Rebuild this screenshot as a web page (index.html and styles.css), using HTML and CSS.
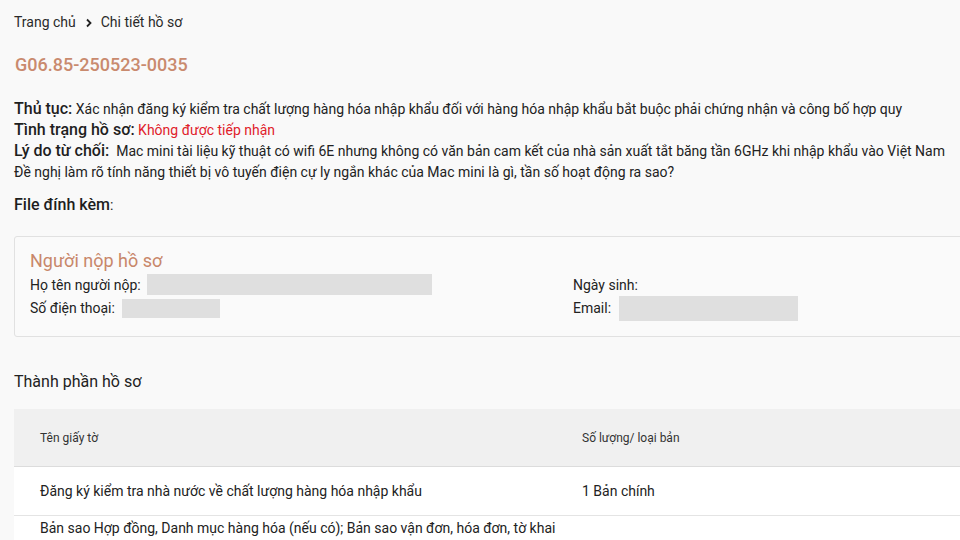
FILE: index.html
```html
<!DOCTYPE html>
<html lang="vi">
<head>
<meta charset="utf-8">
<title>Chi tiết hồ sơ</title>
<link rel="stylesheet" href="styles.css">
</head>
<body>
<div class="page">
  <nav class="crumbs">
    <span>Trang chủ</span>
    <svg class="chev" viewBox="0 0 10 10" width="10" height="10"><path d="M3 1.5 L6.5 5 L3 8.5" fill="none" stroke="#222" stroke-width="1.8"/></svg>
    <span>Chi tiết hồ sơ</span>
  </nav>
  <h1 class="code">G06.85-250523-0035</h1>

  <div class="info">
    <div class="line"><span class="lbl">Thủ tục:</span> <span class="val">Xác nhận đăng ký kiểm tra chất lượng hàng hóa nhập khẩu đối với hàng hóa nhập khẩu bắt buộc phải chứng nhận và công bố hợp quy</span></div>
    <div class="line"><span class="lbl">Tình trạng hồ sơ:</span> <span class="val red">Không được tiếp nhận</span></div>
    <div class="line"><span class="lbl">Lý do từ chối:</span>&nbsp; <span class="val">Mac mini tài liệu kỹ thuật có wifi 6E nhưng không có văn bản cam kết của nhà sản xuất tắt băng tần 6GHz khi nhập khẩu vào Việt Nam<br>Đề nghị làm rõ tính năng thiết bị vô tuyến điện cự ly ngắn khác của Mac mini là gì, tần số hoạt động ra sao?</span></div>
  </div>

  <div class="files"><span class="lbl">File đính kèm</span>:</div>

  <section class="card">
    <h2 class="card-title">Người nộp hồ sơ</h2>
    <div class="grid">
      <div class="field"><span>Họ tên người nộp:</span><span class="mask mask-name"></span></div>
      <div class="field"><span>Ngày sinh:</span></div>
      <div class="field"><span>Số điện thoại:</span><span class="mask mask-phone"></span></div>
      <div class="field"><span>Email:</span><span class="mask mask-email"></span></div>
    </div>
  </section>

  <h3 class="sec">Thành phần hồ sơ</h3>
  <div class="table">
    <div class="thead">
      <div class="c1">Tên giấy tờ</div>
      <div class="c2">Số lượng/ loại bản</div>
    </div>
    <div class="row">
      <div class="c1">Đăng ký kiểm tra nhà nước về chất lượng hàng hóa nhập khẩu</div>
      <div class="c2">1 Bản chính</div>
    </div>
    <div class="row row2">
      <div class="c1">Bản sao Hợp đồng, Danh mục hàng hóa (nếu có); Bản sao vận đơn, hóa đơn, tờ khai hàng hóa nhập khẩu (có xác nhận của người nhập khẩu); ảnh hoặc bản mô tả hàng hóa</div>
      <div class="c2">1 Bản sao</div>
    </div>
  </div>
</div>
</body>
</html>
```

FILE: styles.css
```css
html, body {
  margin: 0;
  padding: 0;
  background: #f9f9f9;
  overflow: hidden;
}
body {
  font-family: Roboto, "Liberation Sans", Arial, sans-serif;
  color: #222;
}
.page {
  width: 1120px;
  padding: 12px 0 0 14px;
}
.crumbs {
  display: flex;
  align-items: center;
  gap: 7px;
  font-size: 14px;
  color: #2a2a2a;
  height: 20px;
}
.chev { margin: 1px 0 0 1px; }
.code {
  margin: 22px 0 0 1px;
  font-size: 18px;
  font-weight: 500;
  color: #c98a6e;
  line-height: 22px;
}
.info {
  margin-top: 23px;
}
.line {
  font-size: 14px;
  line-height: 21px;
}
.lbl {
  font-size: 16px;
  font-weight: 500;
  color: #1e1e1e;
  line-height: 1;
}
.val { font-size: 14px; color: #222; }
.red { color: #e0202a; }
.files {
  margin-top: 11px;
  font-size: 14px;
  line-height: 22px;
}
.card {
  margin-top: 20px;
  border: 1px solid #e1e1e1;
  border-radius: 3px;
  background: #fafafa;
  padding: 12px 15px 16px;
}
.card-title {
  margin: 0;
  font-size: 18px;
  font-weight: 400;
  color: #c8876a;
  line-height: 24px;
}
.grid {
  display: grid;
  grid-template-columns: 543px 1fr;
  font-size: 14px;
}
.field {
  display: flex;
  align-items: center;
  gap: 6px;
  height: 23.5px;
}
.mask { background: #dfdfdf; display: inline-block; }
.mask-name { width: 285px; height: 21px; margin-top: -1px; }
.mask-phone { width: 98px; height: 19px; margin-left: 1px; }
.mask-email { width: 179px; height: 25px; margin-left: 2px; }
.sec {
  margin: 34px 0 0;
  font-size: 16px;
  font-weight: 400;
  color: #222;
  line-height: 22px;
}
.table {
  margin-top: 16px;
  background: #fff;
}
.thead, .row {
  display: grid;
  grid-template-columns: 542px 1fr;
}
.thead {
  background: #f0f0f0;
  height: 57px;
  align-items: center;
  font-size: 12px;
  color: #333;
  border-bottom: 1px solid #dcdcdc;
}
.thead > div, .row > div { padding-left: 26px; }
.row {
  min-height: 48px;
  align-items: center;
  font-size: 14px;
  border-bottom: 1px solid #e4e4e4;
}
.row2 { padding: 2px 0 12px; }
.row2 .c1 { width: 520px; line-height: 20px; }
```
